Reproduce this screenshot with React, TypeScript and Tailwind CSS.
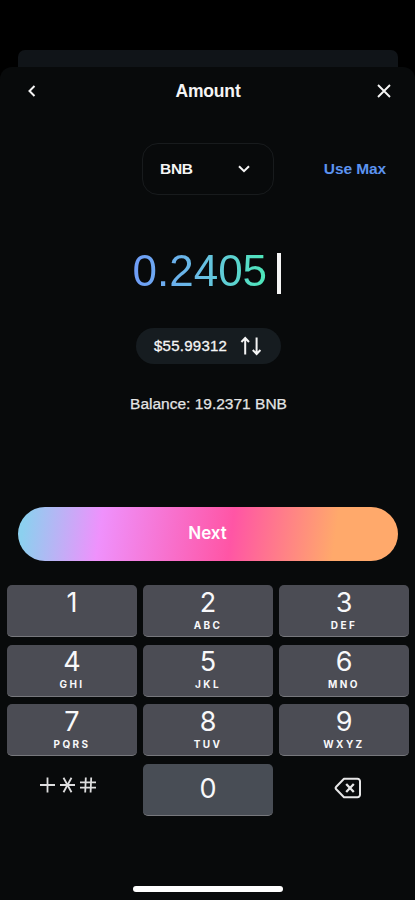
import React, { useState } from 'react'

interface KeyOption {
    digit: string;
    letters?: string;
}

const keys: KeyOption[] = [
    { digit: '1', letters: '' },
    { digit: '2', letters: 'ABC' },
    { digit: '3', letters: 'DEF' },
    { digit: '4', letters: 'GHI' },
    { digit: '5', letters: 'JKL' },
    { digit: '6', letters: 'MNO' },
    { digit: '7', letters: 'PQRS' },
    { digit: '8', letters: 'TUV' },
    { digit: '9', letters: 'WXYZ' },
];

interface PropsKey {
    option: KeyOption;
    onPress: (value: string) => void;
}

const KeyButton = ({ option, onPress }: PropsKey) => (
    <button
        onClick={() => onPress(option.digit)}
        className={`flex h-[52px] flex-col items-center rounded-[5px] border-b border-[#77787d] font-['Inter',sans-serif] text-[#f8f8fa] ${option.letters === undefined ? 'justify-center bg-[#484d55] pb-px' : 'bg-[#4b4c54] pt-[3.5px]'}`}
    >
        <span className="text-[27px] leading-[28px]">{option.digit}</span>
        {option.letters && (
            <span className="mt-[2.4px] text-[10px] leading-[12px] font-bold tracking-[2.4px]">{option.letters}</span>
        )}
    </button>
)

export default function App() {
    const [amount, setAmount] = useState<string>('0.2405');

    const handlePress = (value: string) => setAmount(amount + value);
    const handleDelete = () => setAmount(amount.slice(0, -1));

    return (
        <div className="flex h-[900px] w-[415px] flex-col overflow-hidden bg-black pt-[50px] font-['Liberation_Sans',Arial,sans-serif] text-[#f5f5f5]">
            {/* sheet behind */}
            <div className="mr-[17px] ml-[18px] h-[17px] shrink-0 rounded-t-[7px] bg-[#101418]" />

            <div className="flex flex-1 flex-col rounded-t-[12px] bg-[#080a0b]">
                <header className="grid h-[48px] grid-cols-3 items-center pr-[23px] pl-[27px]">
                    <button aria-label="Back" className="justify-self-start">
                        <svg width="10" height="14" viewBox="0 0 10 14" fill="none" stroke="currentColor" strokeWidth="2">
                            <path d="M7.5 2 2.5 7l5 5" />
                        </svg>
                    </button>
                    <h1 className="pr-[3px] text-center text-[17.5px] font-bold tracking-[-0.15px]">Amount</h1>
                    <button aria-label="Close" className="justify-self-end">
                        <svg width="16" height="16" viewBox="0 0 16 16" fill="none" stroke="currentColor" strokeWidth="1.9">
                            <path d="m2 2 12 12M14 2 2 14" />
                        </svg>
                    </button>
                </header>

                <div className="mt-[28px] grid h-[52px] grid-cols-[142px_132px_1fr] items-center">
                    <span />
                    <button className="flex h-[52px] items-center justify-between rounded-[16px] border border-[#181b1d] pr-[22px] pl-[17px]">
                        <span className="text-[15.5px] font-bold tracking-[-0.3px]">BNB</span>
                        <svg width="14" height="10" viewBox="0 0 14 10" fill="none" stroke="currentColor" strokeWidth="2">
                            <path d="m2 2.2 5 5 5-5" />
                        </svg>
                    </button>
                    <button className="mr-[29px] justify-self-end text-[15.5px] font-bold tracking-[-0.1px] whitespace-nowrap text-[#5c93f0]">Use Max</button>
                </div>

                <div className="mt-[51px] ml-[132.5px] flex h-[50px] items-center">
                    <span className="bg-gradient-to-r from-[#6f9cf8] via-[#68bde4] to-[#4ce8b8] bg-clip-text text-[44px] leading-[50px] text-transparent">{amount}</span>
                    <span className="mt-[4px] ml-[9.5px] h-[41px] w-[4.5px] bg-[#f5f5f5]" />
                </div>

                <button className="mt-[32px] ml-[136px] flex h-[36px] w-[145px] items-center rounded-full bg-[#161c20] pl-[18px]">
                    <span className="text-[15px] tracking-[0.25px] [-webkit-text-stroke:0.3px_#f5f5f5]">$55.99312</span>
                    <svg className="ml-[13px]" width="22" height="20" viewBox="0 0 22 20" fill="none" stroke="currentColor" strokeWidth="2">
                        <path d="M5.2 18.5V2M1.4 6l3.8-4L9 6M16.6 1.5V18M12.8 14l3.8 4 3.8-4" />
                    </svg>
                </button>

                <p className="mt-[30px] pl-[2px] text-center text-[15.5px] leading-[20px] text-[#e4e5e5] [-webkit-text-stroke:0.25px_#e4e5e5]">Balance: 19.2371 BNB</p>

                <button className="mt-[93px] mr-[17px] ml-[18px] h-[54px] shrink-0 rounded-full bg-[linear-gradient(98deg,#8cd0ef_2%,#ef91fc_22%,#ff55a5_56%,#ffa96b_83%)] pr-px font-['Inter',sans-serif] text-[17px] font-semibold text-white">
                    Next
                </button>

                <div className="mt-[24px] grid grid-cols-3 gap-x-[6px] gap-y-[7.6px] pr-[6px] pl-[7px]">
                    {keys.map((option) => (
                        <KeyButton key={option.digit} option={option} onPress={handlePress} />
                    ))}
                    <button aria-label="Symbols" className="flex h-[52px] items-center justify-center pr-[9px] pb-[9px] text-[#dededf]">
                        <svg width="58" height="18" viewBox="0 0 58 18" fill="none" stroke="currentColor" strokeWidth="1.8">
                            <path d="M1 9h15M8.5 1.5v15" />
                            <path d="M21 9h15M24.5 1.8l8 14.4M32.5 1.8l-8 14.4" />
                            <path d="M41 6.3h16M41 11.7h16M46.8 1.5l-.6 15M52.2 1.5l-.6 15" />
                        </svg>
                    </button>
                    <KeyButton option={{ digit: '0' }} onPress={handlePress} />
                    <button aria-label="Delete" onClick={handleDelete} className="flex h-[52px] items-center justify-center pb-[4px] pl-[7px] text-[#e6e6e7]">
                        <svg width="28" height="22" viewBox="0 0 28 22" fill="none" stroke="currentColor" strokeWidth="2" strokeLinejoin="round">
                            <path d="M10 1.8h13.5a2.5 2.5 0 0 1 2.5 2.5v13.4a2.5 2.5 0 0 1-2.5 2.5H10L2 12a1.6 1.6 0 0 1 0-2Z" />
                            <path strokeWidth="2.3" d="m12.2 7 7.6 8M19.8 7l-7.6 8" />
                        </svg>
                    </button>
                </div>

                {/* home indicator */}
                <div className="mt-auto mb-[8px] h-[6px] w-[150px] self-center rounded-full bg-white" />
            </div>
        </div>
    )
}
